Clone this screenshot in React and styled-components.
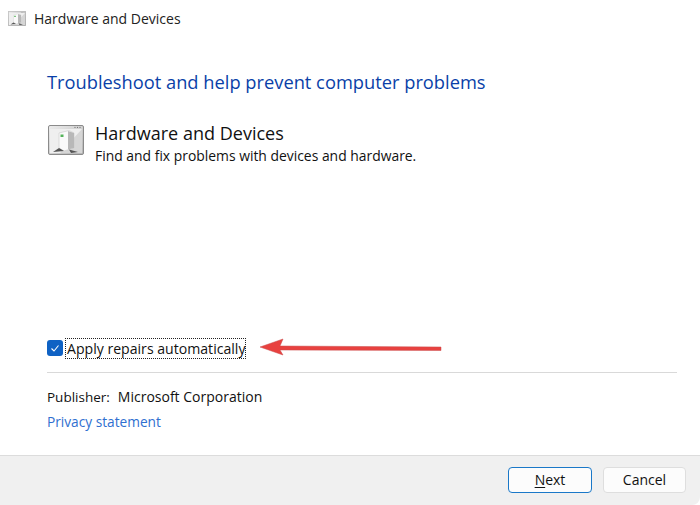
import React from "react";
import styled, { createGlobalStyle } from "styled-components";

const Global = createGlobalStyle`
  html, body { margin: 0; padding: 0; background: #fff; }
  #root { width: 700px; height: 505px; }
`;

const Window = styled.div`
  width: 700px;
  height: 505px;
  display: flex;
  flex-direction: column;
  overflow: hidden;
  background: #fff;
  font-family: "Open Sans", "Noto Sans", sans-serif;
  color: #111;
`;
const TitleBar = styled.div`
  height: 37px;
  margin-bottom: 1px;
  display: flex;
  align-items: center;
  gap: 8px;
  padding-left: 8px;
  font-size: 14px;
  color: #222;
`;
const Content = styled.main`
  flex: 1;
  display: flex;
  flex-direction: column;
  padding: 29px 23px 0 47px;
`;
const Heading = styled.h1`
  margin: 0;
  font-size: 18.3px;
  line-height: 30px;
  font-weight: 400;
  color: #0a3fa8;
`;
const Task = styled.div`
  display: flex;
  gap: 12px;
  margin-top: 28px;
`;
const IconSlot = styled.div`
  padding-left: 1px;
`;
const TaskText = styled.div`
  display: flex;
  flex-direction: column;
  margin-top: -4px;
  margin-left: -1px;
`;
const TaskTitle = styled.div`
  font-size: 18.05px;
  line-height: 25px;
  color: #111;
`;
const TaskSub = styled.div`
  font-size: 13.9px;
  line-height: 20px;
  color: #111;
`;
const Spacer = styled.div`
  flex: 1;
`;
const CheckRow = styled.label`
  display: flex;
  align-items: center;
  position: relative;
  height: 26px;
`;
const Box = styled.span`
  width: 16px;
  height: 16px;
  border-radius: 3px;
  background: #0f62c4;
  display: flex;
  align-items: center;
  justify-content: center;
  margin-right: 3px;
`;
const CheckLabel = styled.span`
  font-size: 14.1px;
  line-height: 19px;
  padding: 0 0 0 1px;
  outline: 1px dotted #222;
  color: #111;
`;
const Arrow = styled.svg`
  position: absolute;
  left: 210px;
  top: 0;
`;
const Rule = styled.hr`
  margin: 11px 0 0;
  border: 0;
  height: 1px;
  background: #d9d9d9;
`;
const Publisher = styled.div`
  margin-top: 14px;
  display: flex;
  gap: 8px;
  font-size: 14px;
  line-height: 20px;
`;
const PublisherLabel = styled.span`
  font-size: 13.5px;
`;
const Link = styled.a`
  margin-top: 5px;
  font-size: 13.7px;
  line-height: 20px;
  color: #2f6fd0;
  margin-bottom: 23px;
`;
const Footer = styled.footer`
  height: 49px;
  padding-bottom: 2px;
  background: #f0f0f0;
  border-top: 1px solid #dcdcdc;
  display: flex;
  justify-content: flex-end;
  align-items: center;
  gap: 11px;
  padding-right: 14px;
  box-sizing: border-box;
  flex: 0 0 50px;
  border-bottom-right-radius: 8px;
`;
const Button = styled.button`
  width: ${p => (p.$primary ? 84 : 83)}px;
  height: 26px;
  box-sizing: border-box;
  border-radius: 4px;
  background: #fcfcfc;
  border: 1px solid ${p => (p.$primary ? "#1a78c8" : "#dedede")};
  font-family: inherit;
  font-size: 14px;
  color: #111;
  padding: 0;
  & u { text-underline-offset: 2px; }
`;

const SystemIcon = ({ width, height, id }) => (
  <svg width={width} height={height} viewBox="0 0 36 30" aria-hidden="true">
    <defs>
      <linearGradient id={id} x1="0" y1="0" x2="1" y2="1">
        <stop offset="0" stopColor="#ededed" />
        <stop offset="1" stopColor="#b4b4b4" />
      </linearGradient>
    </defs>
    <rect x="0.5" y="0.5" width="35" height="29" rx="1.5" fill={`url(#${id})`} stroke="#8b8b8b" />
    <rect x="2" y="4" width="32" height="24" fill="#d6d6d6" />
    <path d="M2 4 H34 L12 28 H2 Z" fill="#efefef" />
    <circle cx="27" cy="2.4" r="0.6" fill="#777" />
    <circle cx="29.5" cy="2.4" r="0.6" fill="#777" />
    <circle cx="32" cy="2.4" r="0.6" fill="#777" />
    <path d="M11 8 L21 5.5 L26 8 V23 L16 26 L11 23 Z" fill="#fafafa" stroke="#c9c9c9" strokeWidth="0.6" />
    <path d="M20 6 L26 8 V23 L20 24.5 Z" fill="#b8b8b8" />
    <rect x="12.5" y="9.5" width="3" height="2.5" fill="#55b35a" />
    <path d="M5 27 L11 23 L16 26 Z M21 24.5 L30 27 L23 28 Z" fill="#555" />
  </svg>
);

export default function App() {
  return (
    <Window>
      <Global />
      <TitleBar>
        <SystemIcon width={18} height={15} id="small" />
        <span>Hardware and Devices</span>
      </TitleBar>
      <Content>
        <Heading>Troubleshoot and help prevent computer problems</Heading>
        <Task>
          <IconSlot>
            <SystemIcon width={36} height={30} id="large" />
          </IconSlot>
          <TaskText>
            <TaskTitle>Hardware and Devices</TaskTitle>
            <TaskSub>Find and fix problems with devices and hardware.</TaskSub>
          </TaskText>
        </Task>
        <Spacer />
        <CheckRow>
          <Box>
            <svg width="10" height="10" viewBox="0 0 10 10" fill="none" stroke="#fff" strokeWidth="1.1">
              <path d="M1.5 5.5 L4 8 L8.5 2.5" />
            </svg>
          </Box>
          <CheckLabel>Apply repairs automatically</CheckLabel>
          <Arrow width="190" height="26" viewBox="0 0 190 26" aria-hidden="true">
            <path d="M3 12 L26 4 L23 11 L184 12 L184 15.5 L23 15 L26 20 Z" fill="#e8413f" stroke="#c94a4a" strokeWidth="0.5" />
          </Arrow>
        </CheckRow>
        <Rule />
        <Publisher>
          <PublisherLabel>Publisher:</PublisherLabel>
          <span>Microsoft Corporation</span>
        </Publisher>
        <Link>Privacy statement</Link>
      </Content>
      <Footer>
        <Button $primary><u>N</u>ext</Button>
        <Button>Cancel</Button>
      </Footer>
    </Window>
  );
}
